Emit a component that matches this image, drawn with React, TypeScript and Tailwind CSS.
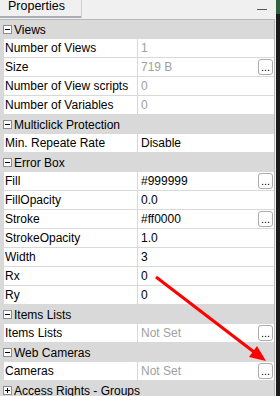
type Row =
  | { kind: 'cat'; label: string; open: boolean }
  | { kind: 'prop'; name: string; value: string; muted?: boolean; button?: boolean };

const rows: Row[] = [
  { kind: 'cat', label: 'Views', open: true },
  { kind: 'prop', name: 'Number of Views', value: '1', muted: true },
  { kind: 'prop', name: 'Size', value: '719 B', muted: true, button: true },
  { kind: 'prop', name: 'Number of View scripts', value: '0', muted: true },
  { kind: 'prop', name: 'Number of Variables', value: '0', muted: true },
  { kind: 'cat', label: 'Multiclick Protection', open: true },
  { kind: 'prop', name: 'Min. Repeate Rate', value: 'Disable' },
  { kind: 'cat', label: 'Error Box', open: true },
  { kind: 'prop', name: 'Fill', value: '#999999', button: true },
  { kind: 'prop', name: 'FillOpacity', value: '0.0' },
  { kind: 'prop', name: 'Stroke', value: '#ff0000', button: true },
  { kind: 'prop', name: 'StrokeOpacity', value: '1.0' },
  { kind: 'prop', name: 'Width', value: '3' },
  { kind: 'prop', name: 'Rx', value: '0' },
  { kind: 'prop', name: 'Ry', value: '0' },
  { kind: 'cat', label: 'Items Lists', open: true },
  { kind: 'prop', name: 'Items Lists', value: 'Not Set', muted: true, button: true },
  { kind: 'cat', label: 'Web Cameras', open: true },
  { kind: 'prop', name: 'Cameras', value: 'Not Set', muted: true, button: true },
  { kind: 'cat', label: 'Access Rights - Groups', open: false },
];

function Toggle({ open }: { open: boolean }) {
  return (
    <div className="relative ml-[3px] h-[9px] w-[9px] shrink-0 border border-[#8c8c8c] bg-white">
      <div className="absolute left-[1px] top-[3px] h-[1px] w-[5px] bg-black" />
      {!open && <div className="absolute left-[3px] top-[1px] h-[5px] w-[1px] bg-black" />}
    </div>
  );
}

function Ellipsis() {
  return (
    <div className="mr-[1px] flex h-[16px] w-[15px] shrink-0 items-end justify-center rounded-[3px] border border-[#adadad] bg-white pb-[1px] text-[11px] leading-[11px] text-black">
      ...
    </div>
  );
}

export default function App() {
  return (
    <div className="flex h-[396px] w-[280px] overflow-hidden bg-[#f0f0f0] text-[12px] leading-[18px] text-black [font-family:'Liberation_Sans',Arial,sans-serif]">
      <div className="relative flex w-[276px] flex-col">
        <div className="flex h-[19px] shrink-0 items-start">
          <div className="flex h-[18px] w-[82px] flex-col border-r border-[#cfcfcf]">
            <div className="h-[16px] pl-[8px] text-[12.5px] leading-[13px]">Properties</div>
            <div className="h-[2px] w-[81px] bg-[#a9aeb5]" />
          </div>
          <div className="flex-1" />
          <div className="mr-[9px] mt-[9px] h-[1px] w-[10px] bg-[#5a5a5a]" />
        </div>

        <div className="w-[275px] flex-1 border-r border-t border-[#b9b9b9] bg-[#d9d9d9]">
          {rows.map((r, i) =>
            r.kind === 'cat' ? (
              <div key={i} className="flex h-[19px] items-center gap-[1px] bg-[#d9d9d9]">
                <Toggle open={r.open} />
                <span className="pl-[1px]">{r.label}</span>
              </div>
            ) : (
              <div key={i} className="flex h-[19px] pl-[4px]">
                <div className="flex w-[134px] items-center border-b border-r border-[#d9d9d9] bg-white pl-[1px] whitespace-nowrap">
                  {r.name}
                </div>
                <div className="flex flex-1 items-center border-b border-[#d9d9d9] bg-white pl-[3px]">
                  <span className={r.muted ? 'flex-1 text-[#a0a0a0]' : 'flex-1'}>{r.value}</span>
                  {r.button && <Ellipsis />}
                </div>
              </div>
            ),
          )}
        </div>

        <svg className="pointer-events-none absolute left-0 top-0" width="276" height="396">
          <line x1="156" y1="277" x2="254" y2="352" stroke="#ff0000" strokeWidth="3" />
          <polygon points="266,361 249,357 257,346" fill="#ff0000" />
        </svg>
      </div>
      <div className="flex w-[4px] flex-col">
        <div className="h-[14px] bg-[#2f5e3c]" />
        <div className="flex-1 bg-[#1b1b1b]" />
      </div>
    </div>
  );
}
